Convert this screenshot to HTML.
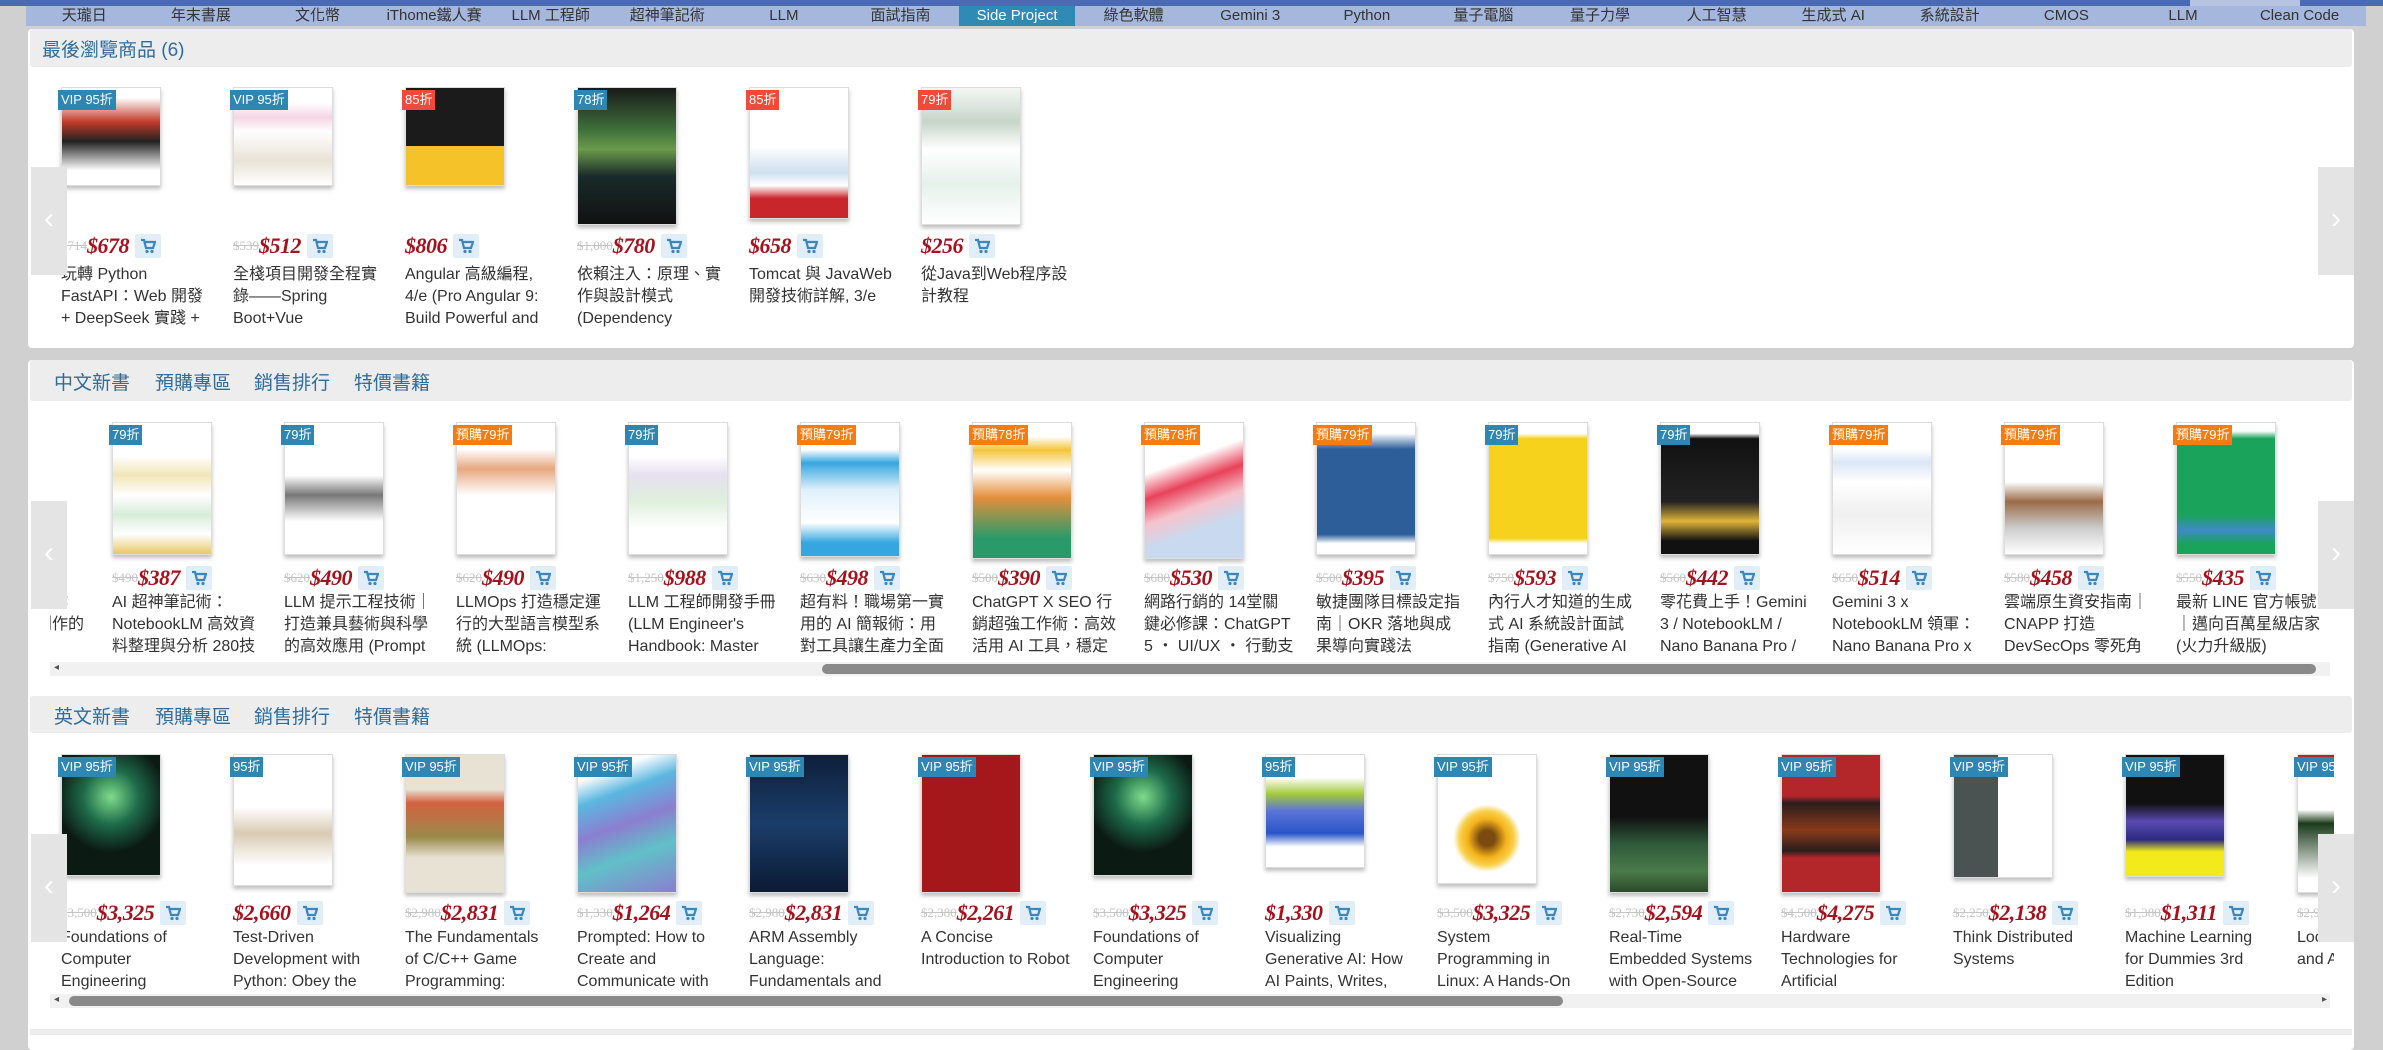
<!DOCTYPE html>
<html><head><meta charset="utf-8">
<style>
*{margin:0;padding:0;box-sizing:border-box}
body{width:2383px;height:1033px;overflow:hidden;background:#cfd0cf;font-family:"Liberation Sans Narrow","Liberation Sans","Noto Sans CJK TC",sans-serif;position:relative}
.top{position:absolute;left:0;top:0;width:2383px;height:6px;background:#4a6bb4}
.nav{position:absolute;left:26px;top:6px;height:20px;width:2340px;background:#a5b7dc;display:flex}
.nav div{width:116.6px;text-align:center;font-size:15px;line-height:20px;color:#333;white-space:nowrap}
.nav .on{background:#2f8ab5;color:#fff}
.panel{position:absolute;left:28px;width:2326px;background:#fff;border-radius:4px}
.hd{position:absolute;left:30px;width:2322px;background:#ededed;border-radius:3px}
.hd span{position:absolute;font-size:19px;color:#2e6d9c;font-family:"Liberation Sans","Noto Sans CJK TC",sans-serif}
.row{position:absolute;overflow:hidden}
.it{position:absolute;width:160px;height:240px}
.cv{position:absolute;left:0;top:0;width:100px;border:1px solid #ddd;box-shadow:0 3px 4px rgba(0,0,0,.25);overflow:hidden}
.bd{position:absolute;left:-3px;top:3px;color:#fff;font-size:13px;padding:0 3px;height:20px;line-height:20px;white-space:nowrap;z-index:2}
.b{background:#2e86b2}.r{background:#f14a3b}.o{background:#f57c10}
.pr{position:absolute;top:141px;left:0;height:26px;white-space:nowrap;display:flex;align-items:center}
.pr s{color:#c4c4c4;font-size:13px;font-family:"Liberation Serif",serif}
.pr b{color:#a5111c;font-size:22px;font-style:italic;font-family:"Liberation Serif",serif;letter-spacing:-.5px}
.ct{display:inline-block;width:26px;height:24px;background:#e1edf7;margin-left:6px;border-radius:2px;position:relative}
.ct svg{position:absolute;left:5px;top:4px}
.tt{position:absolute;top:163px;left:0;width:150px;font-size:16px;line-height:22px;height:66px;overflow:hidden;color:#333}
.r1 .pr{top:146px}.r1 .tt{top:177px}
.r2 .pr{top:143px}.r2 .tt{top:170px}
.ar{position:absolute;width:36px;height:108px;background:#e4e4e4;color:#fff;font-size:30px;text-align:center;line-height:104px;z-index:5}
.trk{position:absolute;height:14px;background:#f1f1f1}
.th{position:absolute;height:10px;background:#8a8a8a;border-radius:6px}
.sa{position:absolute;font-size:10px;color:#555}
</style></head><body>
<div class="top"></div>
<div style="position:absolute;left:2190px;top:0;width:110px;height:6px;background:#fff;opacity:.6"></div>
<div class="nav">
<div>天瓏日</div><div>年末書展</div><div>文化幣</div><div>iThome鐵人賽</div><div>LLM 工程師</div><div>超神筆記術</div><div>LLM</div><div>面試指南</div><div class="on">Side Project</div><div>綠色軟體</div><div>Gemini 3</div><div>Python</div><div>量子電腦</div><div>量子力學</div><div>人工智慧</div><div>生成式 AI</div><div>系統設計</div><div>CMOS</div><div>LLM</div><div>Clean Code</div>
</div>

<svg width="0" height="0" style="position:absolute"><defs><symbol id="cart" viewBox="0 0 16 16"><path d="M1 2h3l2 8h7l2-6H5" fill="none" stroke="#3a87c0" stroke-width="2.2"/><circle cx="7" cy="13.5" r="1.6" fill="#3a87c0"/><circle cx="12" cy="13.5" r="1.6" fill="#3a87c0"/></symbol></defs></svg>

<!-- PANEL 1 -->
<div class="panel" style="top:29px;height:319px"></div>
<div class="hd" style="top:29px;height:38px"><span style="left:12px;top:6px">最後瀏覽商品 (6)</span></div>
<div class="row r1" style="left:0;top:87px;width:2383px;height:250px">
<div class="it" style="left:61px"><div class="cv" style="height:99px;background:linear-gradient(180deg,#fff 10%,#c23a2a 35%,#222 55%,#fff 85%)"></div><div class="bd b">VIP 95折</div><div class="pr"><s>$714</s><b>$678</b><span class="ct"><svg width="16" height="16"><use href="#cart"/></svg></span></div><div class="tt">玩轉 Python FastAPI：Web 開發 + DeepSeek 實踐 + 大模型應用</div></div>
<div class="it" style="left:233px"><div class="cv" style="height:99px;background:linear-gradient(180deg,#fff 15%,#f4d6e4 30%,#fff 45%,#e9e2d6 75%,#fff)"></div><div class="bd b">VIP 95折</div><div class="pr"><s>$539</s><b>$512</b><span class="ct"><svg width="16" height="16"><use href="#cart"/></svg></span></div><div class="tt">全棧項目開發全程實錄——Spring Boot+Vue</div></div>
<div class="it" style="left:405px"><div class="cv" style="height:99px;background:linear-gradient(180deg,#1b1b1b 60%,#f6c22a 60%)"></div><div class="bd r">85折</div><div class="pr"><b>$806</b><span class="ct"><svg width="16" height="16"><use href="#cart"/></svg></span></div><div class="tt">Angular 高級編程, 4/e (Pro Angular 9: Build Powerful and</div></div>
<div class="it" style="left:577px"><div class="cv" style="height:138px;background:linear-gradient(180deg,#1a1a1a,#3d6e3a 30%,#6a9a4a 45%,#1a2a2a 65%,#111)"></div><div class="bd b">78折</div><div class="pr"><s>$1,000</s><b>$780</b><span class="ct"><svg width="16" height="16"><use href="#cart"/></svg></span></div><div class="tt">依賴注入：原理、實作與設計模式 (Dependency</div></div>
<div class="it" style="left:749px"><div class="cv" style="height:132px;background:linear-gradient(180deg,#fff 45%,#cfe0f0 65%,#fff 75%,#c9262c 85%)"></div><div class="bd r">85折</div><div class="pr"><b>$658</b><span class="ct"><svg width="16" height="16"><use href="#cart"/></svg></span></div><div class="tt">Tomcat 與 JavaWeb 開發技術詳解, 3/e</div></div>
<div class="it" style="left:921px"><div class="cv" style="height:138px;background:linear-gradient(180deg,#f4f7f4,#c7d6c9 25%,#fff 45%,#e6f1ec 70%,#fff)"></div><div class="bd r">79折</div><div class="pr"><b>$256</b><span class="ct"><svg width="16" height="16"><use href="#cart"/></svg></span></div><div class="tt">從Java到Web程序設計教程</div></div>
</div>
<div class="ar" style="left:31px;top:167px">‹</div>
<div class="ar" style="left:2318px;top:167px">›</div>

<!-- PANEL 2 + 3 -->
<div class="panel" style="top:360px;height:690px"></div>
<div class="hd" style="top:360px;height:41px"><span style="left:24px;top:8px">中文新書</span><span style="left:125px;top:8px">預購專區</span><span style="left:224px;top:8px">銷售排行</span><span style="left:324px;top:8px">特價書籍</span></div>
<div class="row r2" style="left:50px;top:422px;width:2284px;height:240px">
<div class="it" style="left:-110px"><div class="tt">網路行銷超強工作術：打造爆款創作的</div></div>
<div class="it" style="left:62px"><div class="cv" style="height:133px;background:linear-gradient(180deg,#fff 25%,#f1e6b8 40%,#fff 55%,#d8ecd9 70%,#fff 85%,#e7c866)"></div><div class="bd b">79折</div><div class="pr"><s>$490</s><b>$387</b><span class="ct"><svg width="16" height="16"><use href="#cart"/></svg></span></div><div class="tt">AI 超神筆記術：NotebookLM 高效資料整理與分析 280技</div></div>
<div class="it" style="left:234px"><div class="cv" style="height:133px;background:linear-gradient(180deg,#fff 40%,#777 55%,#fff 75%)"></div><div class="bd b">79折</div><div class="pr"><s>$620</s><b>$490</b><span class="ct"><svg width="16" height="16"><use href="#cart"/></svg></span></div><div class="tt">LLM 提示工程技術｜打造兼具藝術與科學的高效應用 (Prompt</div></div>
<div class="it" style="left:406px"><div class="cv" style="height:133px;background:linear-gradient(180deg,#fff 20%,#e8a880 35%,#fff 55%)"></div><div class="bd o">預購79折</div><div class="pr"><s>$620</s><b>$490</b><span class="ct"><svg width="16" height="16"><use href="#cart"/></svg></span></div><div class="tt">LLMOps 打造穩定運行的大型語言模型系統 (LLMOps:</div></div>
<div class="it" style="left:578px"><div class="cv" style="height:133px;background:linear-gradient(180deg,#fff 25%,#e6e0f0 40%,#dff0dc 60%,#fff 80%)"></div><div class="bd b">79折</div><div class="pr"><s>$1,250</s><b>$988</b><span class="ct"><svg width="16" height="16"><use href="#cart"/></svg></span></div><div class="tt">LLM 工程師開發手冊 (LLM Engineer's Handbook: Master</div></div>
<div class="it" style="left:750px"><div class="cv" style="height:135px;background:linear-gradient(180deg,#fff 20%,#35a6e0 30%,#dff0fa 50%,#fff 75%,#35a6e0 90%)"></div><div class="bd o">預購79折</div><div class="pr"><s>$630</s><b>$498</b><span class="ct"><svg width="16" height="16"><use href="#cart"/></svg></span></div><div class="tt">超有料！職場第一實用的 AI 簡報術：用對工具讓生產力全面進</div></div>
<div class="it" style="left:922px"><div class="cv" style="height:137px;background:linear-gradient(180deg,#fff 10%,#f4c53a 20%,#fff 35%,#e58f3c 55%,#2b9a6a 85%)"></div><div class="bd o">預購78折</div><div class="pr"><s>$500</s><b>$390</b><span class="ct"><svg width="16" height="16"><use href="#cart"/></svg></span></div><div class="tt">ChatGPT X SEO 行銷超強工作術：高效活用 AI 工具，穩定提升</div></div>
<div class="it" style="left:1094px"><div class="cv" style="height:137px;background:linear-gradient(160deg,#fff 30%,#e8425a 45%,#f6c3cc 60%,#c9d9ef 75%)"></div><div class="bd o">預購78折</div><div class="pr"><s>$680</s><b>$530</b><span class="ct"><svg width="16" height="16"><use href="#cart"/></svg></span></div><div class="tt">網路行銷的 14堂關鍵必修課：ChatGPT 5 ・ UI/UX ・ 行動支付</div></div>
<div class="it" style="left:1266px"><div class="cv" style="height:133px;background:linear-gradient(180deg,#fff 8%,#2d5e9a 20%,#2d5e9a 85%,#fff 92%)"></div><div class="bd o">預購79折</div><div class="pr"><s>$500</s><b>$395</b><span class="ct"><svg width="16" height="16"><use href="#cart"/></svg></span></div><div class="tt">敏捷團隊目標設定指南｜OKR 落地與成果導向實踐法</div></div>
<div class="it" style="left:1438px"><div class="cv" style="height:133px;background:linear-gradient(180deg,#fff 8%,#f6d21c 12%,#f6d21c 88%,#fff 92%)"></div><div class="bd b">79折</div><div class="pr"><s>$750</s><b>$593</b><span class="ct"><svg width="16" height="16"><use href="#cart"/></svg></span></div><div class="tt">內行人才知道的生成式 AI 系統設計面試指南 (Generative AI</div></div>
<div class="it" style="left:1610px"><div class="cv" style="height:133px;background:linear-gradient(180deg,#fff 8%,#111 12%,#222 60%,#e0b43a 75%,#111 90%)"></div><div class="bd b">79折</div><div class="pr"><s>$560</s><b>$442</b><span class="ct"><svg width="16" height="16"><use href="#cart"/></svg></span></div><div class="tt">零花費上手！Gemini 3 / NotebookLM / Nano Banana Pro /</div></div>
<div class="it" style="left:1782px"><div class="cv" style="height:133px;background:linear-gradient(180deg,#fff 20%,#dbe6f6 30%,#fff 45%,#f0f0f0 70%,#fff)"></div><div class="bd o">預購79折</div><div class="pr"><s>$650</s><b>$514</b><span class="ct"><svg width="16" height="16"><use href="#cart"/></svg></span></div><div class="tt">Gemini 3 x NotebookLM 領軍：Nano Banana Pro x</div></div>
<div class="it" style="left:1954px"><div class="cv" style="height:133px;background:linear-gradient(180deg,#fff 45%,#9a6b47 60%,#ccc 80%,#fff)"></div><div class="bd o">預購79折</div><div class="pr"><s>$580</s><b>$458</b><span class="ct"><svg width="16" height="16"><use href="#cart"/></svg></span></div><div class="tt">雲端原生資安指南｜CNAPP 打造 DevSecOps 零死角</div></div>
<div class="it" style="left:2126px"><div class="cv" style="height:133px;background:linear-gradient(180deg,#fff 6%,#1aa35a 12%,#1aa35a 70%,#3e8ac9 82%,#1aa35a 92%)"></div><div class="bd o">預購79折</div><div class="pr"><s>$550</s><b>$435</b><span class="ct"><svg width="16" height="16"><use href="#cart"/></svg></span></div><div class="tt">最新 LINE 官方帳號｜邁向百萬星級店家 (火力升級版)</div></div>
</div>
<div class="trk" style="left:50px;top:662px;width:2280px"></div>
<div class="th" style="left:822px;top:664px;width:1494px"></div>
<div class="sa" style="left:54px;top:662px">◂</div>
<div class="ar" style="left:31px;top:501px">‹</div>
<div class="ar" style="left:2318px;top:501px">›</div>

<div class="hd" style="top:696px;height:37px"><span style="left:24px;top:6px">英文新書</span><span style="left:125px;top:6px">預購專區</span><span style="left:224px;top:6px">銷售排行</span><span style="left:324px;top:6px">特價書籍</span></div>
<div class="row" style="left:50px;top:754px;width:2284px;height:240px">
<div class="it" style="left:11px"><div class="cv" style="height:122px;background:radial-gradient(circle at 50% 35%,#7fdc8a,#1d6b4a 30%,#0c1a14 60%)"></div><div class="bd b">VIP 95折</div><div class="pr" style="top:146px"><s>$3,500</s><b>$3,325</b><span class="ct"><svg width="16" height="16"><use href="#cart"/></svg></span></div><div class="tt" style="top:173px">Foundations of Computer Engineering</div></div>
<div class="it" style="left:183px"><div class="cv" style="height:132px;background:linear-gradient(180deg,#fff 40%,#d9cbb4 60%,#fff 85%)"></div><div class="bd b">95折</div><div class="pr" style="top:146px"><b>$2,660</b><span class="ct"><svg width="16" height="16"><use href="#cart"/></svg></span></div><div class="tt" style="top:173px">Test-Driven Development with Python: Obey the</div></div>
<div class="it" style="left:355px"><div class="cv" style="height:139px;background:linear-gradient(180deg,#e8e2d4 25%,#d3613f 35%,#9a8a4a 60%,#e8e2d4 75%)"></div><div class="bd b">VIP 95折</div><div class="pr" style="top:146px"><s>$2,980</s><b>$2,831</b><span class="ct"><svg width="16" height="16"><use href="#cart"/></svg></span></div><div class="tt" style="top:173px">The Fundamentals of C/C++ Game Programming:</div></div>
<div class="it" style="left:527px"><div class="cv" style="height:139px;background:linear-gradient(160deg,#fff 15%,#5bb7e0 30%,#8b7fd0 50%,#61c0c8 70%,#8a7ed0)"></div><div class="bd b">VIP 95折</div><div class="pr" style="top:146px"><s>$1,330</s><b>$1,264</b><span class="ct"><svg width="16" height="16"><use href="#cart"/></svg></span></div><div class="tt" style="top:173px">Prompted: How to Create and Communicate with</div></div>
<div class="it" style="left:699px"><div class="cv" style="height:139px;background:linear-gradient(180deg,#0e1f3a,#1b3d6a 50%,#0b1a33)"></div><div class="bd b">VIP 95折</div><div class="pr" style="top:146px"><s>$2,980</s><b>$2,831</b><span class="ct"><svg width="16" height="16"><use href="#cart"/></svg></span></div><div class="tt" style="top:173px">ARM Assembly Language: Fundamentals and</div></div>
<div class="it" style="left:871px"><div class="cv" style="height:139px;background:#a4181c"></div><div class="bd b">VIP 95折</div><div class="pr" style="top:146px"><s>$2,380</s><b>$2,261</b><span class="ct"><svg width="16" height="16"><use href="#cart"/></svg></span></div><div class="tt" style="top:173px">A Concise Introduction to Robot</div></div>
<div class="it" style="left:1043px"><div class="cv" style="height:122px;background:radial-gradient(circle at 50% 35%,#7fdc8a,#1d6b4a 30%,#0c1a14 60%)"></div><div class="bd b">VIP 95折</div><div class="pr" style="top:146px"><s>$3,500</s><b>$3,325</b><span class="ct"><svg width="16" height="16"><use href="#cart"/></svg></span></div><div class="tt" style="top:173px">Foundations of Computer Engineering</div></div>
<div class="it" style="left:1215px"><div class="cv" style="height:114px;background:linear-gradient(180deg,#fff 20%,#a3c83a 35%,#5b74d8 50%,#2a55c8 70%,#fff 82%)"></div><div class="bd b">95折</div><div class="pr" style="top:146px"><b>$1,330</b><span class="ct"><svg width="16" height="16"><use href="#cart"/></svg></span></div><div class="tt" style="top:173px">Visualizing Generative AI: How AI Paints, Writes,</div></div>
<div class="it" style="left:1387px"><div class="cv" style="height:130px;background:radial-gradient(circle at 50% 65%,#7a4a10 8%,#f4b21a 20%,#f8d04a 28%,#fff 35%)"></div><div class="bd b">VIP 95折</div><div class="pr" style="top:146px"><s>$3,500</s><b>$3,325</b><span class="ct"><svg width="16" height="16"><use href="#cart"/></svg></span></div><div class="tt" style="top:173px">System Programming in Linux: A Hands-On</div></div>
<div class="it" style="left:1559px"><div class="cv" style="height:139px;background:linear-gradient(180deg,#111 45%,#2f5a3a 65%,#4a7a4a 85%,#2a4a2a)"></div><div class="bd b">VIP 95折</div><div class="pr" style="top:146px"><s>$2,730</s><b>$2,594</b><span class="ct"><svg width="16" height="16"><use href="#cart"/></svg></span></div><div class="tt" style="top:173px">Real-Time Embedded Systems with Open-Source</div></div>
<div class="it" style="left:1731px"><div class="cv" style="height:139px;background:linear-gradient(180deg,#b3262a 30%,#2a1d1d 35%,#8a3a1a 55%,#2a1d1d 70%,#b3262a 75%)"></div><div class="bd b">VIP 95折</div><div class="pr" style="top:146px"><s>$4,500</s><b>$4,275</b><span class="ct"><svg width="16" height="16"><use href="#cart"/></svg></span></div><div class="tt" style="top:173px">Hardware Technologies for Artificial</div></div>
<div class="it" style="left:1903px"><div class="cv" style="height:124px;background:linear-gradient(90deg,#4a5252 45%,#fff 45%)"></div><div class="bd b">VIP 95折</div><div class="pr" style="top:146px"><s>$2,250</s><b>$2,138</b><span class="ct"><svg width="16" height="16"><use href="#cart"/></svg></span></div><div class="tt" style="top:173px">Think Distributed Systems</div></div>
<div class="it" style="left:2075px"><div class="cv" style="height:123px;background:linear-gradient(180deg,#111 40%,#5a4ab0 55%,#2a2a80 70%,#f2ea1a 80%)"></div><div class="bd b">VIP 95折</div><div class="pr" style="top:146px"><s>$1,380</s><b>$1,311</b><span class="ct"><svg width="16" height="16"><use href="#cart"/></svg></span></div><div class="tt" style="top:173px">Machine Learning for Dummies 3rd Edition</div></div>
<div class="it" style="left:2247px"><div class="cv" style="height:139px;background:linear-gradient(180deg,#b3262a 10%,#fff 12%,#fff 40%,#1a3a1a 50%,#fff 90%)"></div><div class="bd b">VIP 95折</div><div class="pr" style="top:146px"><s>$2,900</s><b>$2,755</b></div><div class="tt" style="top:173px">Local AI Mapping and Automation</div></div>
</div>
<div class="trk" style="left:50px;top:994px;width:2280px"></div>
<div class="th" style="left:69px;top:996px;width:1494px"></div>
<div class="sa" style="left:54px;top:994px">◂</div>
<div class="sa" style="left:2322px;top:994px">▸</div>
<div class="ar" style="left:31px;top:834px">‹</div>
<div class="ar" style="left:2318px;top:834px">›</div>
<div style="position:absolute;left:30px;top:1029px;width:2322px;height:6px;background:#ededed"></div>
</body></html>
